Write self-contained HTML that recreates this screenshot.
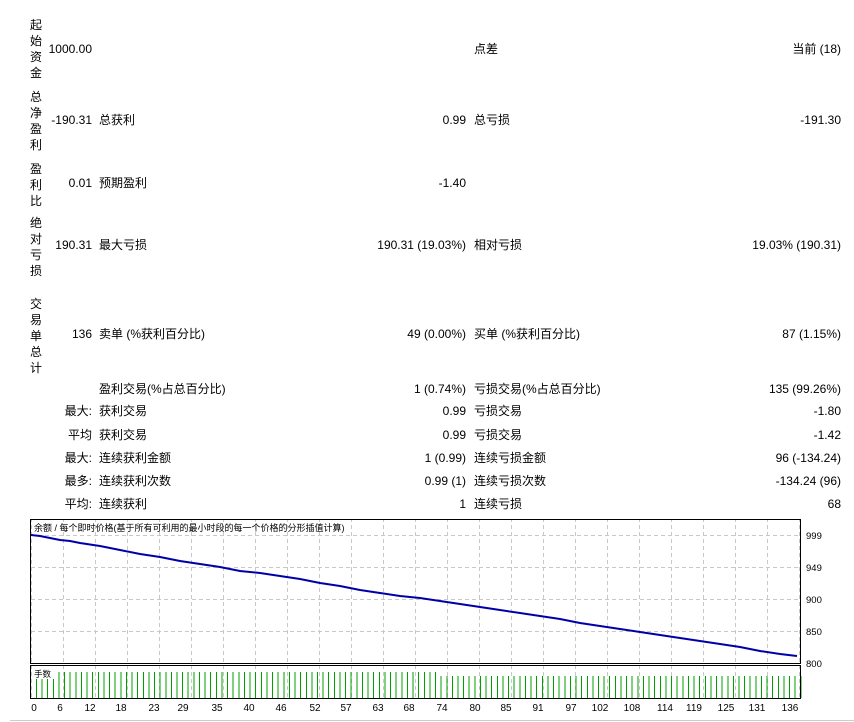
<!DOCTYPE html>
<html><head><meta charset="utf-8"><style>
body{margin:0;width:854px;height:722px;background:#fff;position:relative;overflow:hidden;font-family:"Liberation Sans","Noto Sans CJK SC",sans-serif;font-size:12px;color:#000}
.t{position:absolute;line-height:16px;white-space:nowrap}
.r{text-align:right}
.v{position:absolute;left:30px;width:14px;line-height:16px;font-size:12px}
</style></head><body>
<div class="v" style="top:17px">起<br>始<br>资<br>金</div>
<div class="v" style="top:89px">总<br>净<br>盈<br>利</div>
<div class="v" style="top:161px">盈<br>利<br>比</div>
<div class="v" style="top:215px">绝<br>对<br>亏<br>损</div>
<div class="v" style="top:296px">交<br>易<br>单<br>总<br>计</div>

<div class="t r" style="right:762px;top:41px">1000.00</div>
<div class="t" style="left:474px;top:41px">点差</div>
<div class="t r" style="right:13px;top:41px">当前 (18)</div>

<div class="t r" style="right:762px;top:112px">-190.31</div>
<div class="t" style="left:99px;top:112px">总获利</div>
<div class="t r" style="right:388px;top:112px">0.99</div>
<div class="t" style="left:474px;top:112px">总亏损</div>
<div class="t r" style="right:13px;top:112px">-191.30</div>

<div class="t r" style="right:762px;top:175px">0.01</div>
<div class="t" style="left:99px;top:175px">预期盈利</div>
<div class="t r" style="right:388px;top:175px">-1.40</div>

<div class="t r" style="right:762px;top:237px">190.31</div>
<div class="t" style="left:99px;top:237px">最大亏损</div>
<div class="t r" style="right:388px;top:237px">190.31 (19.03%)</div>
<div class="t" style="left:474px;top:237px">相对亏损</div>
<div class="t r" style="right:13px;top:237px">19.03% (190.31)</div>

<div class="t r" style="right:762px;top:326px">136</div>
<div class="t" style="left:99px;top:326px">卖单 (%获利百分比)</div>
<div class="t r" style="right:388px;top:326px">49 (0.00%)</div>
<div class="t" style="left:474px;top:326px">买单 (%获利百分比)</div>
<div class="t r" style="right:13px;top:326px">87 (1.15%)</div>

<div class="t" style="left:99px;top:381px">盈利交易(%占总百分比)</div>
<div class="t r" style="right:388px;top:381px">1 (0.74%)</div>
<div class="t" style="left:474px;top:381px">亏损交易(%占总百分比)</div>
<div class="t r" style="right:13px;top:381px">135 (99.26%)</div>

<div class="t r" style="right:762px;top:403px">最大:</div>
<div class="t" style="left:99px;top:403px">获利交易</div>
<div class="t r" style="right:388px;top:403px">0.99</div>
<div class="t" style="left:474px;top:403px">亏损交易</div>
<div class="t r" style="right:13px;top:403px">-1.80</div>

<div class="t r" style="right:762px;top:427px">平均</div>
<div class="t" style="left:99px;top:427px">获利交易</div>
<div class="t r" style="right:388px;top:427px">0.99</div>
<div class="t" style="left:474px;top:427px">亏损交易</div>
<div class="t r" style="right:13px;top:427px">-1.42</div>

<div class="t r" style="right:762px;top:450px">最大:</div>
<div class="t" style="left:99px;top:450px">连续获利金额</div>
<div class="t r" style="right:388px;top:450px">1 (0.99)</div>
<div class="t" style="left:474px;top:450px">连续亏损金额</div>
<div class="t r" style="right:13px;top:450px">96 (-134.24)</div>

<div class="t r" style="right:762px;top:473px">最多:</div>
<div class="t" style="left:99px;top:473px">连续获利次数</div>
<div class="t r" style="right:388px;top:473px">0.99 (1)</div>
<div class="t" style="left:474px;top:473px">连续亏损次数</div>
<div class="t r" style="right:13px;top:473px">-134.24 (96)</div>

<div class="t r" style="right:762px;top:496px">平均:</div>
<div class="t" style="left:99px;top:496px">连续获利</div>
<div class="t r" style="right:388px;top:496px">1</div>
<div class="t" style="left:474px;top:496px">连续亏损</div>
<div class="t r" style="right:13px;top:496px">68</div>

<svg width="854" height="722" style="position:absolute;left:0;top:0" xmlns="http://www.w3.org/2000/svg">
<defs>
<pattern id="vg" x="63" y="0" width="32" height="722" patternUnits="userSpaceOnUse"><line x1="0.5" y1="0" x2="0.5" y2="722" stroke="#c8c8c8" stroke-dasharray="4,3"/></pattern>
</defs>
<rect x="31" y="520" width="770" height="143" fill="url(#vg)"/>
<rect x="31" y="666" width="770" height="32" fill="url(#vg)"/>
<g stroke="#c8c8c8" stroke-dasharray="4,3">
<line x1="31" y1="535.5" x2="800" y2="535.5"/>
<line x1="31" y1="567.5" x2="800" y2="567.5"/>
<line x1="31" y1="599.5" x2="800" y2="599.5"/>
<line x1="31" y1="631.5" x2="800" y2="631.5"/>
</g>
<path stroke="#00a000" stroke-width="1" fill="none" shape-rendering="crispEdges" d="M36.5,679v19m5.62,-19v19m5.62,-19v19m5.62,-19v19
m5.62,-26v26m5.62,-26v26m5.62,-26v26m5.62,-26v26m5.62,-26v26m5.62,-26v26m5.62,-26v26m5.62,-26v26m5.62,-26v26m5.62,-26v26
m5.62,-26v26m5.62,-26v26m5.62,-26v26m5.62,-26v26m5.62,-26v26m5.62,-26v26m5.62,-26v26m5.62,-26v26m5.62,-26v26m5.62,-26v26
m5.62,-26v26m5.62,-26v26m5.62,-26v26m5.62,-26v26m5.62,-26v26m5.62,-26v26m5.62,-26v26m5.62,-26v26m5.62,-26v26m5.62,-26v26
m5.62,-26v26m5.62,-26v26m5.62,-26v26m5.62,-26v26m5.62,-26v26m5.62,-26v26m5.62,-26v26m5.62,-26v26m5.62,-26v26m5.62,-26v26
m5.62,-26v26m5.62,-26v26m5.62,-26v26m5.62,-26v26m5.62,-26v26m5.62,-26v26m5.62,-26v26m5.62,-26v26m5.62,-26v26m5.62,-26v26
m5.62,-26v26m5.62,-26v26m5.62,-26v26m5.62,-26v26m5.62,-26v26m5.62,-26v26m5.62,-26v26m5.62,-26v26m5.62,-26v26m5.62,-26v26
m5.62,-26v26m5.62,-26v26m5.62,-26v26m5.62,-26v26m5.62,-26v26m5.62,-26v26m5.62,-26v26m5.62,-26v26
m5.62,-22v22m5.62,-22v22m5.62,-22v22m5.62,-22v22m5.62,-22v22m5.62,-22v22m5.62,-22v22m5.62,-22v22m5.62,-22v22m5.62,-22v22
m5.62,-22v22m5.62,-22v22m5.62,-22v22m5.62,-22v22m5.62,-22v22m5.62,-22v22m5.62,-22v22m5.62,-22v22m5.62,-22v22m5.62,-22v22
m5.62,-22v22m5.62,-22v22m5.62,-22v22m5.62,-22v22m5.62,-22v22m5.62,-22v22m5.62,-22v22m5.62,-22v22m5.62,-22v22m5.62,-22v22
m5.62,-22v22m5.62,-22v22m5.62,-22v22m5.62,-22v22m5.62,-22v22m5.62,-22v22m5.62,-22v22m5.62,-22v22m5.62,-22v22m5.62,-22v22
m5.62,-22v22m5.62,-22v22m5.62,-22v22m5.62,-22v22m5.62,-22v22m5.62,-22v22m5.62,-22v22m5.62,-22v22m5.62,-22v22m5.62,-22v22
m5.62,-22v22m5.62,-22v22m5.62,-22v22m5.62,-22v22m5.62,-22v22m5.62,-22v22m5.62,-22v22m5.62,-22v22m5.62,-22v22m5.62,-22v22
m5.62,-22v22m5.62,-22v22m5.62,-22v22m5.62,-22v22m5.62,-22v22"/>
<polyline fill="none" stroke="#0000aa" stroke-width="2" points="31,535 40,536 50,538 60,540 70,541 80,543 100,546 120,550 140,554 160,557 180,561 200,564 220,567 240,571 260,573 280,576 300,579 320,583 340,586 360,590 380,593 400,596 420,598 440,601 460,604 480,607 500,610 520,613 540,616 560,619 580,623 600,626 620,629 640,632 660,635 680,638 700,641 720,644 740,647 760,651 780,654 797,656"/>
<rect x="30.5" y="519.5" width="770" height="144" fill="none" stroke="#000"/>
<rect x="30.5" y="665.5" width="770" height="33" fill="none" stroke="#000"/>
<g font-family="Liberation Sans, Noto Sans CJK SC, sans-serif" font-size="9">
<text x="34" y="531">余额 / 每个即时价格(基于所有可利用的最小时段的每一个价格的分形插值计算)</text>
<rect x="33" y="669" width="20" height="10" fill="#fff"/>
<text x="34" y="677" font-size="8.5">手数</text>
</g>
<g font-family="Liberation Sans, sans-serif" font-size="9.5" fill="#000">
<text x="806" y="539">999</text><text x="806" y="571">949</text><text x="806" y="603">900</text><text x="806" y="635">850</text><text x="806" y="667">800</text>
</g>
<g font-family="Liberation Sans, sans-serif" font-size="10" fill="#000" text-anchor="middle">
<text x="34" y="711">0</text><text x="60" y="711">6</text><text x="90" y="711">12</text><text x="121" y="711">18</text><text x="154" y="711">23</text><text x="183" y="711">29</text><text x="217" y="711">35</text><text x="249" y="711">40</text><text x="281" y="711">46</text><text x="315" y="711">52</text><text x="346" y="711">57</text><text x="378" y="711">63</text><text x="409" y="711">68</text><text x="442" y="711">74</text><text x="475" y="711">80</text><text x="506" y="711">85</text><text x="538" y="711">91</text><text x="571" y="711">97</text><text x="600" y="711">102</text><text x="632" y="711">108</text><text x="665" y="711">114</text><text x="694" y="711">119</text><text x="726" y="711">125</text><text x="757" y="711">131</text><text x="790" y="711">136</text>
</g>
<line x1="10" y1="720.5" x2="854" y2="720.5" stroke="#ccc"/>
</svg>
</body></html>
